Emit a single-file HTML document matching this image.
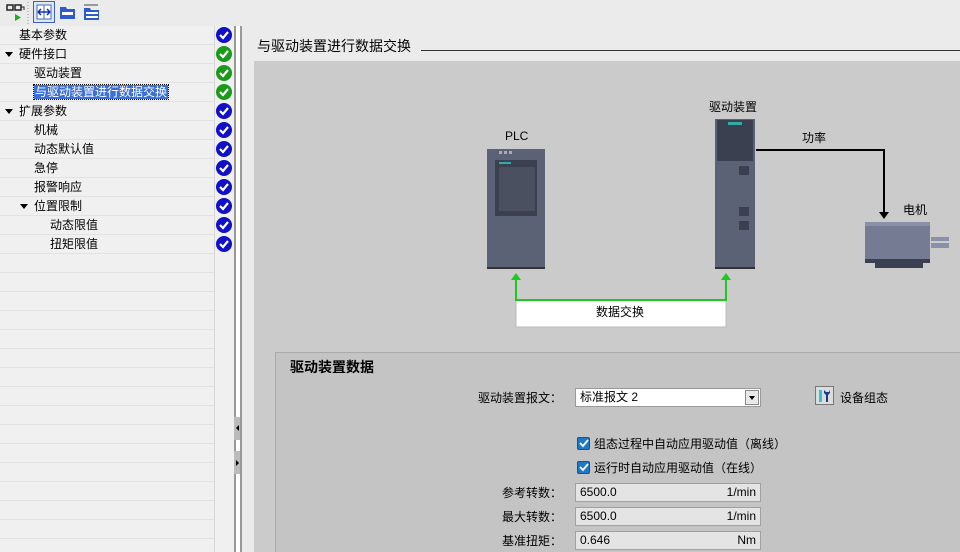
<!DOCTYPE html><html><head><meta charset="utf-8"><style>
*{margin:0;padding:0;box-sizing:border-box}
body{width:960px;height:552px;overflow:hidden;background:#ebebeb;font-family:"Liberation Sans","Noto Sans CJK SC",sans-serif;font-size:12px;color:#000;position:relative}
.a{position:absolute}
.row{position:absolute;left:0;width:214px;height:19px;border-bottom:1px solid #e2e2e2;line-height:18px;white-space:nowrap}
.chk{position:absolute;left:216px;width:16px;height:16px;border-radius:50%}
.b{background:#1010c8}.g{background:#1a9a1a}
.chk svg{position:absolute;left:0;top:0}
.tri{display:inline-block;width:0;height:0;border-left:4px solid transparent;border-right:4px solid transparent;border-top:5px solid #000;vertical-align:middle;margin-right:6px}
.lbl{position:absolute;text-align:right;width:120px;left:442px}
.inp{position:absolute;left:575px;width:186px;height:19px;background:#e4e4e4;border:1px solid #a0a0a0;line-height:17px;padding:0 4px}
.inp span{float:right}
.cb{position:absolute;left:577px;width:13px;height:13px;background:#1e78c8;border:1px solid #2a4a80;border-radius:2px}
</style></head><body>
<div class="a" style="left:0;top:0;width:960px;height:26px;background:#ebebeb"></div>
<svg class="a" style="left:0;top:0" width="110" height="26">
<rect x="7" y="5" width="6" height="5" fill="none" stroke="#222" stroke-width="1.5"/><rect x="15" y="5" width="6" height="5" fill="none" stroke="#222" stroke-width="1.5"/><path d="M21 7h3v3" stroke="#222" fill="none"/>
<path d="M15 14v7l6-3.5z" fill="#2a2"/>
<line x1="28" y1="2" x2="28" y2="24" stroke="#999" stroke-dasharray="1 2"/>
<rect x="33.5" y="1.5" width="21" height="21" fill="#dde8f5" stroke="#4060c0"/><rect x="37" y="5" width="14" height="14" fill="#fff" stroke="#4a6ab0"/><line x1="44" y1="5" x2="44" y2="19" stroke="#4a6ab0"/><path d="M38 12h12M38 12l3-3M38 12l3 3M50 12l-3-3M50 12l-3 3" stroke="#1030b0" stroke-width="1.5" fill="none"/>
<path d="M60 7h6l1 2h8v10H60z" fill="#2d5cc8"/><rect x="62" y="12" width="11" height="3" fill="#fff"/>
<rect x="84" y="4" width="14" height="2" fill="#999"/><path d="M84 8h6l1 2h8v10H84z" fill="#2d5cc8"/><rect x="86" y="12" width="12" height="2" fill="#fff"/><rect x="86" y="16" width="12" height="2" fill="#fff"/>
</svg>
<div class="a" style="left:0;top:26px;width:234px;height:526px;background:#f0f0f0"></div>
<div class="a" style="left:214px;top:26px;width:1px;height:526px;background:#d8d8d8"></div>
<div class="a" style="left:234px;top:26px;width:2px;height:526px;background:#999"></div>
<div class="a" style="left:236px;top:26px;width:4px;height:526px;background:#fff"></div>
<div class="a" style="left:240px;top:26px;width:2px;height:526px;background:#999"></div>
<div class="a" style="left:234px;top:417px;width:6px;height:23px;background:#bbb"></div>
<div class="a" style="left:234px;top:451px;width:6px;height:23px;background:#bbb"></div>
<svg class="a" style="left:234px;top:417px" width="6" height="60"><path d="M2 11l3-3v6z" fill="#000"/><path d="M2 43v6l3-3z" fill="#000"/></svg>

<div class="row" style="top:26px;padding-left:19px">基本参数</div>
<div class="row" style="top:45px;padding-left:5px"><span class="tri"></span>硬件接口</div>
<div class="row" style="top:64px;padding-left:34px">驱动装置</div>
<div class="row" style="top:83px;padding-left:34px"><span style="background:#3a6fd8;color:#fff;outline:1px dotted #000;padding:0 1px">与驱动装置进行数据交换</span></div>
<div class="row" style="top:102px;padding-left:5px"><span class="tri"></span>扩展参数</div>
<div class="row" style="top:121px;padding-left:34px">机械</div>
<div class="row" style="top:140px;padding-left:34px">动态默认值</div>
<div class="row" style="top:159px;padding-left:34px">急停</div>
<div class="row" style="top:178px;padding-left:34px">报警响应</div>
<div class="row" style="top:197px;padding-left:20px"><span class="tri"></span>位置限制</div>
<div class="row" style="top:216px;padding-left:50px">动态限值</div>
<div class="row" style="top:235px;padding-left:50px">扭矩限值</div>
<div class="row" style="top:254px"></div><div class="row" style="top:273px"></div><div class="row" style="top:292px"></div><div class="row" style="top:311px"></div><div class="row" style="top:330px"></div><div class="row" style="top:349px"></div><div class="row" style="top:368px"></div><div class="row" style="top:387px"></div><div class="row" style="top:406px"></div><div class="row" style="top:425px"></div><div class="row" style="top:444px"></div><div class="row" style="top:463px"></div><div class="row" style="top:482px"></div><div class="row" style="top:501px"></div><div class="row" style="top:520px"></div>

<div class="chk b" style="top:27px"><svg width="16" height="16"><path d="M4 8l3 3 5-6" stroke="#fff" stroke-width="2.2" fill="none"/></svg></div>
<div class="chk g" style="top:46px"><svg width="16" height="16"><path d="M4 8l3 3 5-6" stroke="#fff" stroke-width="2.2" fill="none"/></svg></div>
<div class="chk g" style="top:65px"><svg width="16" height="16"><path d="M4 8l3 3 5-6" stroke="#fff" stroke-width="2.2" fill="none"/></svg></div>
<div class="chk g" style="top:84px"><svg width="16" height="16"><path d="M4 8l3 3 5-6" stroke="#fff" stroke-width="2.2" fill="none"/></svg></div>
<div class="chk b" style="top:103px"><svg width="16" height="16"><path d="M4 8l3 3 5-6" stroke="#fff" stroke-width="2.2" fill="none"/></svg></div>
<div class="chk b" style="top:122px"><svg width="16" height="16"><path d="M4 8l3 3 5-6" stroke="#fff" stroke-width="2.2" fill="none"/></svg></div>
<div class="chk b" style="top:141px"><svg width="16" height="16"><path d="M4 8l3 3 5-6" stroke="#fff" stroke-width="2.2" fill="none"/></svg></div>
<div class="chk b" style="top:160px"><svg width="16" height="16"><path d="M4 8l3 3 5-6" stroke="#fff" stroke-width="2.2" fill="none"/></svg></div>
<div class="chk b" style="top:179px"><svg width="16" height="16"><path d="M4 8l3 3 5-6" stroke="#fff" stroke-width="2.2" fill="none"/></svg></div>
<div class="chk b" style="top:198px"><svg width="16" height="16"><path d="M4 8l3 3 5-6" stroke="#fff" stroke-width="2.2" fill="none"/></svg></div>
<div class="chk b" style="top:217px"><svg width="16" height="16"><path d="M4 8l3 3 5-6" stroke="#fff" stroke-width="2.2" fill="none"/></svg></div>
<div class="chk b" style="top:236px"><svg width="16" height="16"><path d="M4 8l3 3 5-6" stroke="#fff" stroke-width="2.2" fill="none"/></svg></div>

<div class="a" style="left:257px;top:36px;font-size:14px">与驱动装置进行数据交换</div>
<div class="a" style="left:421px;top:50px;width:539px;height:1px;background:#333"></div>
<div class="a" style="left:254px;top:61px;width:706px;height:491px;background:#cbcbcb"></div>

<svg class="a" style="left:470px;top:90px" width="490" height="240">
<rect x="17" y="59" width="58" height="119" fill="#5b6275"/><rect x="17" y="177" width="58" height="2" fill="#333"/>
<rect x="29" y="61" width="3" height="3" fill="#aab"/><rect x="34" y="61" width="3" height="3" fill="#aab"/><rect x="39" y="61" width="3" height="3" fill="#aab"/>
<rect x="25" y="70" width="42" height="56" fill="#3a4050"/><rect x="29" y="77" width="36" height="44" fill="#4a5060"/><rect x="29" y="72" width="12" height="2" fill="#3aa"/>
<rect x="245" y="29" width="40" height="149" fill="#5b6275"/><rect x="245" y="177" width="40" height="2" fill="#333"/>
<rect x="247" y="30" width="36" height="41" fill="#3a4050"/><rect x="258" y="32" width="14" height="3" fill="#3aa"/>
<rect x="269" y="76" width="10" height="9" fill="#3a4050"/><rect x="269" y="117" width="10" height="9" fill="#3a4050"/><rect x="269" y="131" width="10" height="9" fill="#3a4050"/>
<path d="M286 60H414V125" stroke="#000" stroke-width="2" fill="none"/><path d="M409 122h10l-5 7z" fill="#000"/>
<rect x="395" y="132" width="65" height="41" fill="#757b93"/><rect x="395" y="132" width="65" height="4" fill="#8a90a6"/><rect x="395" y="169" width="65" height="4" fill="#3a4050"/><rect x="405" y="172" width="48" height="6" fill="#3a4050"/>
<rect x="461" y="147" width="18" height="11" fill="#8a90a6"/><rect x="461" y="151" width="18" height="2" fill="#ccc"/>
<rect x="46" y="210" width="210" height="27" fill="#fff" stroke="#bbb"/>
<path d="M46 187V210H256V187" stroke="#1fc81f" stroke-width="2" fill="none"/>
<path d="M41 190h10l-5-7z" fill="#1fc81f"/><path d="M251 190h10l-5-7z" fill="#1fc81f"/>
</svg>
<div class="a" style="left:505px;top:129px">PLC</div>
<div class="a" style="left:709px;top:98px">驱动装置</div>
<div class="a" style="left:802px;top:129px">功率</div>
<div class="a" style="left:903px;top:201px">电机</div>
<div class="a" style="left:596px;top:303px">数据交换</div>

<div class="a" style="left:275px;top:352px;width:685px;height:200px;background:#c4c4c4;border-top:1px solid #aaa;border-left:1px solid #aaa"></div>
<div class="a" style="left:290px;top:357px;font-size:14px;font-weight:bold">驱动装置数据</div>
<div class="lbl" style="top:389px">驱动装置报文：</div>
<div class="a" style="left:575px;top:388px;width:186px;height:19px;background:#fff;border:1px solid #999;line-height:17px;padding-left:4px">标准报文 2</div>
<div class="a" style="left:745px;top:390px;width:14px;height:15px;background:#e8e8e8;border:1px solid #888"><div style="margin:5px 0 0 3px;width:0;height:0;border-left:3px solid transparent;border-right:3px solid transparent;border-top:4px solid #000"></div></div>
<svg class="a" style="left:815px;top:386px" width="20" height="20"><rect x=".5" y=".5" width="18" height="18" fill="#ddd" stroke="#777"/><rect x="4" y="4" width="3" height="12" fill="#2cc"/><path d="M9 4v3l2 2v7h2V9l2-2V4l-1 2h-3z" fill="#1a3a8a"/></svg>
<div class="a" style="left:840px;top:389px">设备组态</div>
<div class="cb" style="top:437px"><svg width="11" height="11"><path d="M2 5l3 3 5-6" stroke="#fff" stroke-width="1.8" fill="none"/></svg></div>
<div class="a" style="left:594px;top:435px">组态过程中自动应用驱动值（离线）</div>
<div class="cb" style="top:461px"><svg width="11" height="11"><path d="M2 5l3 3 5-6" stroke="#fff" stroke-width="1.8" fill="none"/></svg></div>
<div class="a" style="left:594px;top:459px">运行时自动应用驱动值（在线）</div>
<div class="lbl" style="top:484px">参考转数：</div>
<div class="inp" style="top:483px">6500.0<span>1/min</span></div>
<div class="lbl" style="top:508px">最大转数：</div>
<div class="inp" style="top:507px">6500.0<span>1/min</span></div>
<div class="lbl" style="top:532px">基准扭矩：</div>
<div class="inp" style="top:531px">0.646<span>Nm</span></div>
</body></html>
